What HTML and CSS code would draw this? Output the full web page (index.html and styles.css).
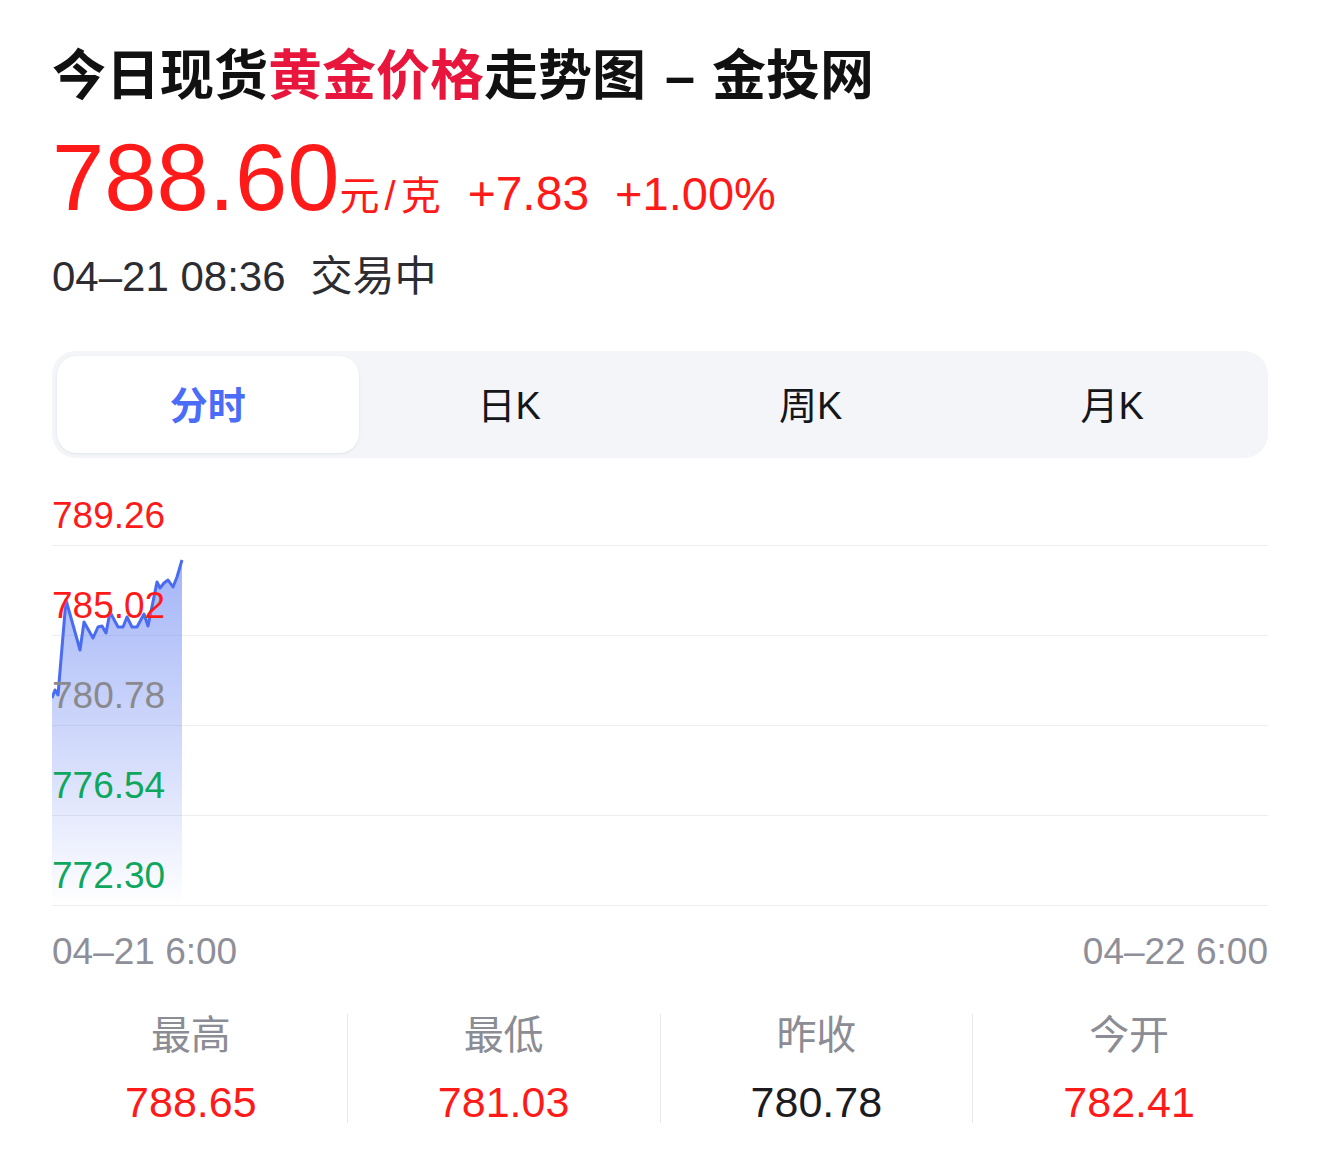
FILE: index.html
```html
<!DOCTYPE html>
<html lang="zh-CN">
<head>
<meta charset="utf-8">
<title>今日现货黄金价格走势图 – 金投网</title>
<link rel="stylesheet" href="styles.css">
</head>
<body>
<div class="page">
  <h1 class="title">今日现货<span class="hl">黄金价格</span>走势图<span class="dash">–</span>金投网</h1>
  <div class="price-row">
    <span class="price">788.60</span>
    <span class="unit">元<span class="slash">/</span>克</span>
    <span class="chg">+7.83</span>
    <span class="pct">+1.00%</span>
  </div>
  <div class="status">04–21 08:36<span class="state">交易中</span></div>

  <div class="tabs">
    <div class="tab active">分时</div>
    <div class="tab">日K</div>
    <div class="tab">周K</div>
    <div class="tab">月K</div>
  </div>

  <div class="chart">
    <svg class="chart-svg" viewBox="0 0 1216 447" width="1216" height="447">
      <defs>
        <linearGradient id="fillg" x1="0" y1="103" x2="0" y2="447" gradientUnits="userSpaceOnUse">
          <stop offset="0" stop-color="#4a6cf0" stop-opacity="0.5"/>
          <stop offset="0.6" stop-color="#4a6cf0" stop-opacity="0.22"/>
          <stop offset="1" stop-color="#4a6cf0" stop-opacity="0"/>
        </linearGradient>
      </defs>
      <polygon fill="url(#fillg)" points="0,240 3,232 6,237 14,142 28,192 32,164 41,180 46,169 50,168 54,175 58,154 66,169 71,169 75,159 80,169 85,169 92,156 96,168 105,124 108,130 112,125 116,122 121,129 125,119 130,102 130,447 0,447"/>
      <polyline fill="none" stroke="#4a6cf0" stroke-width="3" stroke-linejoin="round" points="0,240 3,232 6,237 14,142 28,192 32,164 41,180 46,169 50,168 54,175 58,154 66,169 71,169 75,159 80,169 85,169 92,156 96,168 105,124 108,130 112,125 116,122 121,129 125,119 130,102"/>
    </svg>
    <div class="band first"><span class="lbl up">789.26</span></div>
    <div class="band"><span class="lbl up">785.02</span></div>
    <div class="band"><span class="lbl flat">780.78</span></div>
    <div class="band"><span class="lbl down">776.54</span></div>
    <div class="band"><span class="lbl down">772.30</span></div>
  </div>

  <div class="axis"><span>04–21 6:00</span><span>04–22 6:00</span></div>

  <div class="stats">
    <div class="stat"><div class="stat-label">最高</div><div class="stat-val up">788.65</div></div>
    <div class="stat"><div class="stat-label">最低</div><div class="stat-val up">781.03</div></div>
    <div class="stat"><div class="stat-label">昨收</div><div class="stat-val plain">780.78</div></div>
    <div class="stat"><div class="stat-label">今开</div><div class="stat-val up">782.41</div></div>
  </div>
</div>
</body>
</html>
```
FILE: styles.css
```css
html, body {
  margin: 0;
  padding: 0;
  background: #ffffff;
}
body {
  font-family: "Liberation Sans", "Noto Sans CJK SC", sans-serif;
  color: #111111;
}
.page {
  padding: 0 52px;
}
.title {
  margin: 0;
  padding-top: 39px;
  font-size: 54px;
  line-height: 74px;
  font-weight: 700;
  color: #111111;
  white-space: nowrap;
}
.title .hl {
  color: #e8163c;
}
.title .dash {
  display: inline-block;
  margin: 0 17px 0 19px;
}
.price-row {
  display: flex;
  align-items: baseline;
  margin-top: 18px;
  color: #ff1a1a;
  white-space: nowrap;
}
.price {
  font-size: 94px;
  line-height: 94px;
}
.unit {
  font-size: 40px;
  margin-left: 0;
}
.unit .slash {
  display: inline-block;
  margin: 0 5px;
}
.chg {
  font-size: 48px;
  margin-left: 27px;
}
.pct {
  font-size: 47px;
  margin-left: 26px;
}
.status {
  margin-top: 27px;
  height: 54px;
  font-size: 42px;
  line-height: 50px;
  color: #2b2d33;
  white-space: nowrap;
}
.status .state {
  margin-left: 25px;
}
.tabs {
  margin-top: 45px;
  height: 107px;
  box-sizing: border-box;
  padding: 5px;
  background: #f4f5f9;
  border-radius: 24px;
  display: flex;
}
.tab {
  flex: 1;
  display: flex;
  align-items: center;
  justify-content: center;
  padding-bottom: 4px;
  font-size: 38px;
  color: #15161a;
  border-radius: 20px;
}
.tab.active {
  background: #ffffff;
  color: #4a6cf7;
  font-weight: 700;
  box-shadow: 0 1px 3px rgba(0, 0, 0, 0.07);
}
.chart {
  position: relative;
}
.chart-svg {
  position: absolute;
  left: 0;
  top: 0;
  display: block;
}
.band {
  height: 90px;
  box-sizing: border-box;
  border-bottom: 1px solid #eeeeee;
  display: flex;
  align-items: flex-end;
  padding-bottom: 11px;
}
.band.first {
  height: 88px;
}
.lbl {
  position: relative;
  font-size: 37px;
  line-height: 36px;
}
.up { color: #ff1a1a; }
.flat { color: #8a8a8e; }
.down { color: #0fa75e; }
.plain { color: #1c1c1e; }
.axis {
  margin-top: 28px;
  display: flex;
  justify-content: space-between;
  font-size: 37px;
  line-height: 36px;
  color: #8e8f99;
}
.stats {
  margin: 44px -17px 0;
  display: flex;
}
.stat {
  flex: 1;
  height: 109px;
  display: flex;
  flex-direction: column;
  align-items: center;
}
.stat + .stat {
  border-left: 1px solid #e8e8e8;
}
.stat-label {
  margin-top: 1px;
  font-size: 40px;
  line-height: 40px;
  color: #8b8c94;
}
.stat-val {
  margin-top: 27px;
  font-size: 43px;
  line-height: 41px;
}
```
